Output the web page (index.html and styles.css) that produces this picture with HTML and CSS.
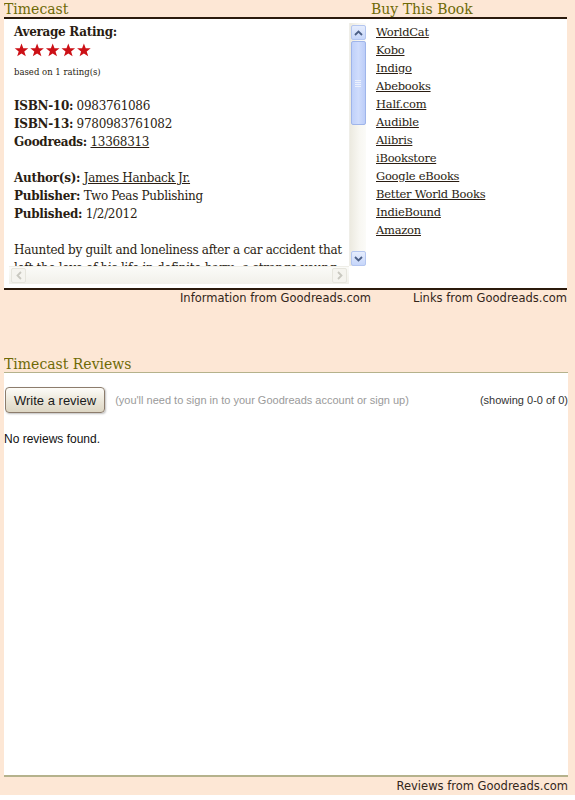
FILE: index.html
```html
<!DOCTYPE html>
<html>
<head>
<meta charset="utf-8">
<link rel="stylesheet" href="styles.css">
</head>
<body>
<div class="page">
  <div class="top">
    <h2 class="title">Timecast</h2>
    <h2 class="title title-right">Buy This Book</h2>

    <div class="panel panel-left">
      <div class="scroller">
        <div class="viewport">
          <div class="info">
            <div class="line"><b>Average Rating:</b></div>
            <div class="stars">
              <svg width="80" height="14" viewBox="0 0 80 14">
                <g fill="#cc1016">
                  <polygon points="7.5,0.5 9.3,5.2 14.3,5.3 10.3,8.4 11.8,13.3 7.5,10.4 3.2,13.3 4.7,8.4 0.7,5.3 5.7,5.2"/>
                  <polygon transform="translate(15.6 0)" points="7.5,0.5 9.3,5.2 14.3,5.3 10.3,8.4 11.8,13.3 7.5,10.4 3.2,13.3 4.7,8.4 0.7,5.3 5.7,5.2"/>
                  <polygon transform="translate(31.2 0)" points="7.5,0.5 9.3,5.2 14.3,5.3 10.3,8.4 11.8,13.3 7.5,10.4 3.2,13.3 4.7,8.4 0.7,5.3 5.7,5.2"/>
                  <polygon transform="translate(46.8 0)" points="7.5,0.5 9.3,5.2 14.3,5.3 10.3,8.4 11.8,13.3 7.5,10.4 3.2,13.3 4.7,8.4 0.7,5.3 5.7,5.2"/>
                  <polygon transform="translate(62.4 0)" points="7.5,0.5 9.3,5.2 14.3,5.3 10.3,8.4 11.8,13.3 7.5,10.4 3.2,13.3 4.7,8.4 0.7,5.3 5.7,5.2"/>
                </g>
              </svg>
            </div>
            <div class="based">based on 1 rating(s)</div>

            <div class="group">
              <div class="line"><b>ISBN-10:</b> 0983761086</div>
              <div class="line"><b>ISBN-13:</b> 9780983761082</div>
              <div class="line"><b>Goodreads:</b> <a href="#">13368313</a></div>
            </div>

            <div class="group">
              <div class="line"><b>Author(s):</b> <a href="#">James Hanback Jr.</a></div>
              <div class="line"><b>Publisher:</b> Two Peas Publishing</div>
              <div class="line"><b>Published:</b> 1/2/2012</div>
            </div>

            <div class="group desc">Haunted by guilt and loneliness after a car accident that left the love of his life in definite harm, a strange young man journeys through time.</div>
          </div>
        </div>
        <div class="vbar">
          <div class="sbtn sbtn-up">
            <svg width="9" height="6" viewBox="0 0 9 6"><path d="M1 5 L4.5 1.5 L8 5" fill="none" stroke="#4b5f86" stroke-width="1.8"/></svg>
          </div>
          <div class="thumb">
            <div class="grip"></div>
          </div>
          <div class="vtrack"></div>
          <div class="sbtn sbtn-down">
            <svg width="9" height="6" viewBox="0 0 9 6"><path d="M1 1 L4.5 4.5 L8 1" fill="none" stroke="#4b5f86" stroke-width="1.8"/></svg>
          </div>
        </div>
        <div class="hbar">
          <div class="hbtn">
            <svg width="6" height="9" viewBox="0 0 6 9"><path d="M5 1 L1.5 4.5 L5 8" fill="none" stroke="#c9c8c0" stroke-width="1.8"/></svg>
          </div>
          <div class="htrack"></div>
          <div class="hbtn">
            <svg width="6" height="9" viewBox="0 0 6 9"><path d="M1 1 L4.5 4.5 L1 8" fill="none" stroke="#c9c8c0" stroke-width="1.8"/></svg>
          </div>
        </div>
        <div class="corner"></div>
      </div>
    </div>

    <div class="panel panel-right">
      <ul class="links">
        <li><a href="#">WorldCat</a></li>
        <li><a href="#">Kobo</a></li>
        <li><a href="#">Indigo</a></li>
        <li><a href="#">Abebooks</a></li>
        <li><a href="#">Half.com</a></li>
        <li><a href="#">Audible</a></li>
        <li><a href="#">Alibris</a></li>
        <li><a href="#">iBookstore</a></li>
        <li><a href="#">Google eBooks</a></li>
        <li><a href="#">Better World Books</a></li>
        <li><a href="#">IndieBound</a></li>
        <li><a href="#">Amazon</a></li>
      </ul>
    </div>

    <div class="credit">Information from Goodreads.com</div>
    <div class="credit">Links from Goodreads.com</div>
  </div>

  <div class="reviews">
    <h2 class="title rtitle">Timecast Reviews</h2>
    <div class="rbody">
      <div class="rbar">
        <button class="wbtn">Write a review</button>
        <span class="note">(you'll need to sign in to your Goodreads account or sign up)</span>
        <span class="count">(showing 0-0 of 0)</span>
      </div>
      <p class="none">No reviews found.</p>
    </div>
    <div class="credit rcredit">Reviews from Goodreads.com</div>
  </div>
</div>
</body>
</html>
```

FILE: styles.css
```css
html, body {
  margin: 0;
  padding: 0;
  background: #ffffff;
}

.page {
  background: #fde7d5;
  padding: 0 7px 0 4px;
  height: 795px;
  box-sizing: border-box;
  font-family: "DejaVu Serif", Georgia, serif;
  color: #2a1d12;
}

.top {
  display: grid;
  grid-template-columns: 367px 196px;
}

.title {
  margin: 0;
  height: 17px;
  font-family: "DejaVu Serif", Georgia, serif;
  font-weight: normal;
  font-size: 14px;
  line-height: 18px;
  color: #6e6a06;
  border-bottom: 2px solid #2b1a0c;
  white-space: nowrap;
  overflow: hidden;
}

.panel {
  background: #ffffff;
  border-bottom: 2px solid #2b1a0c;
}

.panel-left {
  padding: 4px 5px 4px 5px;
}

.panel-right {
  padding: 4px 0 0 5px;
}

.scroller {
  display: grid;
  grid-template-columns: 340px 17px;
  grid-template-rows: 243px 18px;
}

.viewport {
  overflow: hidden;
  padding-left: 5px;
}

.info {
  width: 345px;
  font-size: 12px;
  letter-spacing: -0.3px;
  line-height: 18px;
}

.info b {
  font-weight: bold;
}

.line {
  white-space: nowrap;
}

.stars {
  height: 18px;
  display: flex;
  align-items: center;
}

.stars svg {
  display: block;
}

.based {
  margin-top: 6px;
  font-size: 8.5px;
  letter-spacing: 0;
  line-height: 14px;
}

.group {
  margin-top: 18px;
}

.desc {
  white-space: normal;
}

a {
  color: #2a1d12;
  text-decoration: underline;
}

/* fake vertical scrollbar */
.vbar {
  display: flex;
  flex-direction: column;
  align-items: center;
  padding: 2px 0 0 0;
  background: linear-gradient(to right, #eceae0, #f8f7f2 60%, #fbfbf8);
  border-left: 1px solid #efeee8;
  box-sizing: border-box;
}

.sbtn {
  width: 15px;
  height: 15px;
  box-sizing: border-box;
  border: 1px solid #b4c6f0;
  border-radius: 2px;
  background: linear-gradient(to bottom, #e6edfd, #c6d6fa);
  display: flex;
  align-items: center;
  justify-content: center;
}

.thumb {
  margin-top: 1px;
  width: 15px;
  height: 84px;
  box-sizing: border-box;
  border: 1px solid #9fb5ea;
  border-radius: 2px;
  background: linear-gradient(to right, #c0d1fa, #cfdcfc 50%, #bccdf8);
  display: flex;
  align-items: center;
  justify-content: center;
}

.grip {
  width: 6px;
  height: 7px;
  background: repeating-linear-gradient(to bottom, #ecf1fd 0 1px, transparent 1px 2px);
}

.vtrack {
  flex: 1;
}

.sbtn-down {
  margin-bottom: 0;
}

/* fake horizontal scrollbar */
.hbar {
  display: flex;
  align-items: center;
  padding: 0 2px;
  background: linear-gradient(to bottom, #fbfbf8, #f1f0ea);
  border-top: 1px solid #efeee8;
}

.hbtn {
  width: 15px;
  height: 15px;
  box-sizing: border-box;
  border: 1px solid #e6e5dd;
  border-radius: 2px;
  background: #f5f4ef;
  display: flex;
  align-items: center;
  justify-content: center;
}

.htrack {
  flex: 1;
}

.corner {
  background: #ffffff;
}

.links {
  list-style: none;
  margin: 0;
  padding: 0;
  font-size: 11.5px;
  letter-spacing: -0.25px;
  line-height: 18px;
}

.credit {
  text-align: right;
  font-family: "DejaVu Sans", Verdana, sans-serif;
  font-size: 11.5px;
  line-height: 17px;
  color: #33261a;
}

.reviews {
  margin-top: 48px;
  width: 564px;
}

.rtitle {
  border-bottom: 1px solid #b5b28c;
}

.rbody {
  background: #ffffff;
  height: 402px;
  border-bottom: 2px solid #b5b28c;
  font-family: "Liberation Sans", Arial, sans-serif;
}

.rbar {
  display: flex;
  align-items: center;
  padding: 14px 0 0 1px;
}

.wbtn {
  height: 26px;
  padding: 0 8px;
  font-family: "Liberation Sans", Arial, sans-serif;
  font-size: 13px;
  color: #1a1a1a;
  border: 1px solid #8c7c6c;
  border-radius: 4px;
  background: linear-gradient(to bottom, #fdfcf8, #e9e4d6 60%, #ddd6c4);
  box-shadow: 1px 1px 2px rgba(0, 0, 0, 0.25);
}

.note {
  margin-left: 10px;
  font-size: 11px;
  color: #9a9a9a;
}

.count {
  margin-left: auto;
  font-size: 11px;
  color: #333333;
}

.none {
  margin: 19px 0 0 0;
  font-size: 12px;
  line-height: 15px;
  color: #111111;
}

.rcredit {
  line-height: 18px;
}
```
